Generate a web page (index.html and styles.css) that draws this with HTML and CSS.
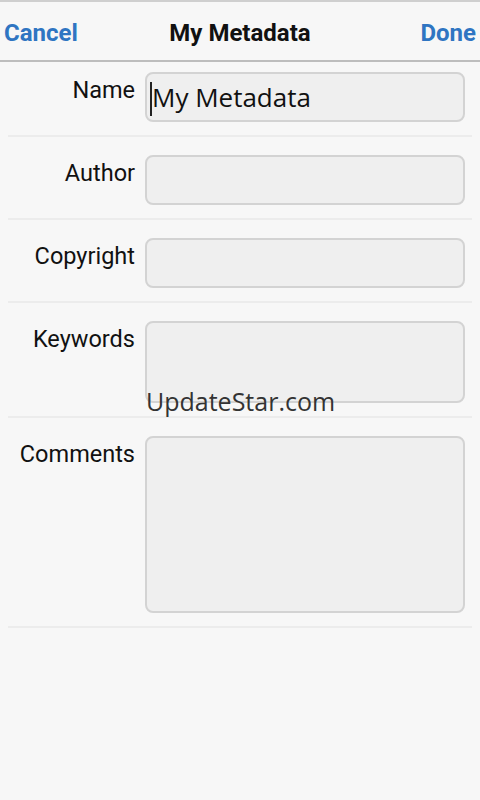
FILE: index.html
```html
<!DOCTYPE html>
<html lang="en">
<head>
  <meta charset="UTF-8">
  <meta name="viewport" content="width=device-width, initial-scale=1.0">
  <title>My Metadata</title>
  <link rel="stylesheet" href="styles.css">
</head>
<body>
  <div class="header">
    <a class="nav-btn" href="#">Cancel</a>
    <div class="title">My Metadata</div>
    <a class="nav-btn done" href="#">Done</a>
  </div>

  <div class="form">
    <!-- Name -->
    <div class="row first">
      <label class="label">Name</label>
      <div class="field"><span class="cursor"></span>My Metadata</div>
    </div>

    <div class="row">
      <label class="label">Author</label>
      <div class="field"></div>
    </div>

    <div class="row">
      <label class="label">Copyright</label>
      <div class="field"></div>
    </div>

    <div class="row">
      <label class="label">Keywords</label>
      <div class="field keywords"></div>
      <div class="watermark">UpdateStar.com</div>
    </div>

    <div class="row">
      <label class="label">Comments</label>
      <div class="field comments"></div>
    </div>
  </div>
</body>
</html>
```

FILE: styles.css
```css
body {
  font-family: Roboto, "Liberation Sans", sans-serif;
  background-color: #f7f7f7;
  color: #111;
  margin: 0;
  padding: 0;
}

.header {
  height: 58px;
  display: grid;
  grid-template-columns: 1fr auto 1fr;
  align-items: center;
  padding: 0 4px;
  border-top: 2px solid #cfcfcf;
  border-bottom: 2px solid #bdbdbd;
}

.nav-btn {
  color: #2f75c2;
  text-decoration: none;
  font-size: 24px;
  font-weight: bold;
  padding-top: 4px;
}

.nav-btn.done {
  text-align: right;
}

.title {
  font-size: 24px;
  font-weight: bold;
  color: #111;
  padding-top: 4px;
}

.form {
  padding: 0 8px;
}

.row {
  position: relative;
  display: flex;
  align-items: flex-start;
  padding: 18px 0 13px;
  border-bottom: 2px solid #ececec;
}

.row.first {
  padding-top: 10px;
}

.label {
  width: 137px;
  text-align: right;
  font-size: 23.5px;
  padding-top: 4px;
  padding-right: 10px;
  box-sizing: border-box;
}

.field {
  width: 320px;
  height: 50px;
  box-sizing: border-box;
  background-color: #efefef;
  border: 2px solid #d3d3d3;
  border-radius: 8px;
  font-family: "Open Sans", sans-serif;
  font-size: 26px;
  color: #111;
  padding: 5px 0 0 3px;
  display: flex;
  align-items: flex-start;
}

.field.keywords {
  height: 82px;
}

.field.comments {
  height: 177px;
}

.cursor {
  display: inline-block;
  width: 2px;
  height: 34px;
  background-color: #222;
  margin-top: 3px;
}

.watermark {
  position: absolute;
  left: 138px;
  top: 81px;
  font-family: "Open Sans", sans-serif;
  font-size: 25px;
  color: #333;
}
```
